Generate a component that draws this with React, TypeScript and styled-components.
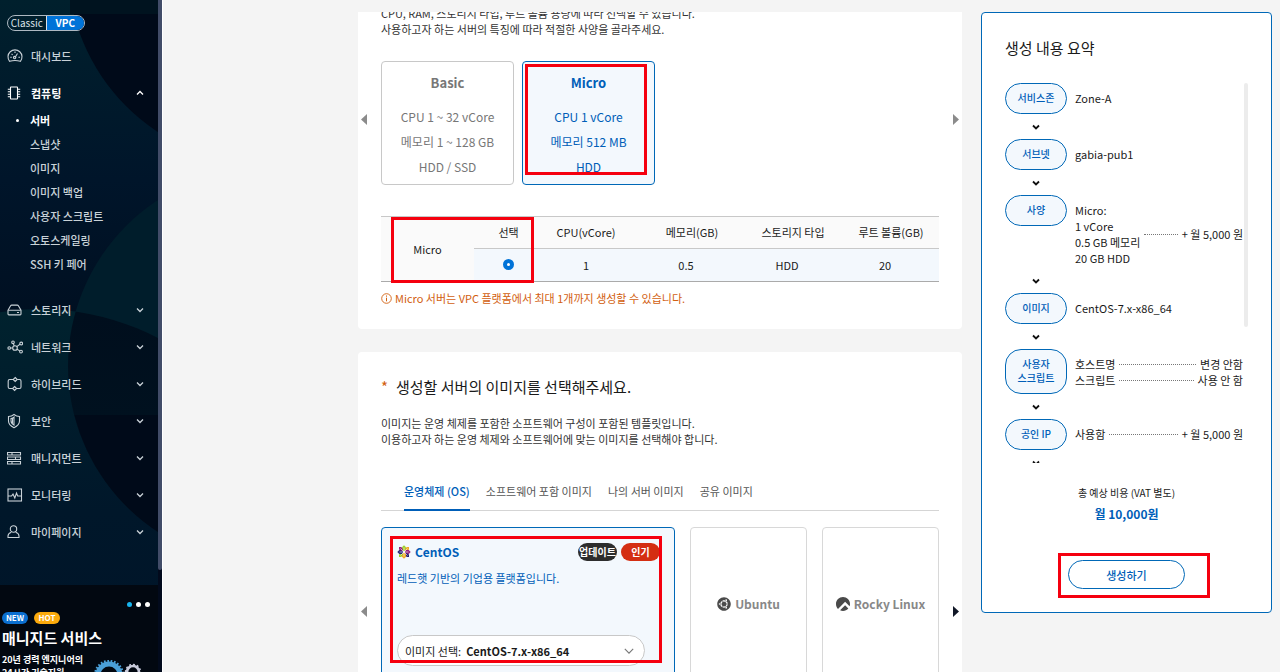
import React, { useState } from "react";
import styled, { createGlobalStyle, css } from "styled-components";
import { FaUbuntu } from "react-icons/fa";
import { SiRockylinux } from "react-icons/si";

const color = {
  page: "#f4f4f4",
  blue: "#005eb8",
  blueLine: "#0068b7",
  tint: "#f3f8fd",
  line: "#c8c8c8",
  muted: "#777",
  ink: "#1a1a1a",
  orange: "#d2600f",
  mark: "#f5000f",
};

const Global = createGlobalStyle`
  *, *::before, *::after { box-sizing: border-box; }
  body {
    margin: 0;
    background: ${color.page};
    color: ${color.ink};
    font: 400 11px/16px "Noto Sans CJK KR", "Noto Sans", sans-serif;
  }
  button, select, input { font: inherit; color: inherit; margin: 0; }
  button { background: none; border: 0; padding: 0; cursor: pointer; }
  h1, h2, p, ul, dl, dd, dt { margin: 0; padding: 0; }
  ul { list-style: none; }
  a { color: inherit; text-decoration: none; }
`;

const Shell = styled.div`
  display: flex;
  height: 100vh;
  overflow: hidden;
`;

/* ---------- sidebar ---------- */

const Sidebar = styled.aside`
  flex: none;
  display: flex;
  flex-direction: column;
  position: relative;
  width: 163px;
  background: #001329;
  color: #c9d2d8;
  border-right: 1px solid #fff;
  overflow: hidden;
`;

const Backdrop = styled.svg`
  position: absolute;
  top: 0;
  left: 0;
  width: 158px;
  height: 815px;
`;

const ScrollTrack = styled.div`
  position: absolute;
  top: 0;
  right: 0;
  bottom: 0;
  width: 4px;
  background: #020a1c;

  &::before {
    content: "";
    display: block;
    height: 570px;
    border-radius: 0 0 2px 2px;
    background: #414c68;
  }
`;

const Nav = styled.nav`
  position: relative;
  flex: 1;
  min-height: 0;
  overflow: hidden;
  padding: 15px 4px 0 7px;
`;

const Platform = styled.div`
  display: flex;
  width: 78px;
  height: 16px;
  margin-bottom: 6px;
  border: 1px solid #aeb9c2;
  border-radius: 8px;
  overflow: hidden;
`;

const PlatformButton = styled.button<{ $on?: boolean }>`
  flex: 1;
  font-size: 10px;
  line-height: 14px;
  color: #dbe2e7;
  ${(p) =>
    p.$on &&
    css`
      background: #0073d8;
      color: #fff;
      font-weight: 700;
      border-left: 1px solid #dbe2e7;
    `}
`;

const NavItem = styled.a<{ $open?: boolean }>`
  display: grid;
  grid-template-columns: 16px 1fr 10px;
  column-gap: 8px;
  align-items: center;
  height: 37px;
  padding-right: 13px;
  font-weight: 500;
  ${(p) =>
    p.$open &&
    css`
      color: #fff;
      font-weight: 700;
    `}
  svg {
    display: block;
    fill: none;
    stroke: currentColor;
  }
`;

const SubList = styled.ul`
  margin: -3px 0 15px;
`;

const SubLink = styled.a<{ $on?: boolean }>`
  display: flex;
  align-items: center;
  height: 24px;
  padding-left: 9px;
  font-weight: ${(p) => (p.$on ? 700 : 500)};
  color: ${(p) => (p.$on ? "#fff" : "inherit")};

  &::before {
    content: "";
    width: 3px;
    height: 3px;
    margin-right: 11px;
    border-radius: 50%;
    background: ${(p) => (p.$on ? "#fff" : "transparent")};
  }
`;

const Promo = styled.section`
  position: relative;
  flex: none;
  height: 87px;
  margin-right: 4px;
  padding: 17px 8px 0 2px;
  background: #020811;
  color: #fff;
  overflow: hidden;
`;

const Dots = styled.div`
  display: flex;
  justify-content: flex-end;
  gap: 4px;
  margin-bottom: 5px;
`;

const Dot = styled.span<{ $on?: boolean }>`
  width: 5px;
  height: 5px;
  border-radius: 50%;
  background: ${(p) => (p.$on ? "#17b4ee" : "#fff")};
`;

const Tags = styled.div`
  display: flex;
  gap: 6px;
`;

const Tag = styled.span<{ $bg: string }>`
  width: 26px;
  border-radius: 6px;
  background: ${(p) => p.$bg};
  font-size: 8px;
  line-height: 12px;
  font-weight: 700;
  text-align: center;
`;

const PromoTitle = styled.p`
  margin-top: 3px;
  font-size: 15px;
  line-height: 22px;
  font-weight: 700;
`;

const PromoText = styled.p`
  margin-top: 4px;
  font-size: 9px;
  line-height: 13px;
  font-weight: 700;
`;

const Gears = styled.svg`
  position: absolute;
  right: 14px;
  bottom: 0;
`;

/* ---------- main column ---------- */

const Page = styled.div`
  flex: 1;
  min-width: 0;
  display: flex;
  align-items: flex-start;
  gap: 19px;
  padding: 12px 8px 0 195px;
`;

const Main = styled.main`
  flex: 1;
  min-width: 0;
  overflow: hidden;
`;

const Card = styled.section<{ $first?: boolean }>`
  background: #fff;
  border-radius: ${(p) => (p.$first ? "0 0 4px 4px" : "4px")};
  padding: ${(p) => (p.$first ? "0 0 23px" : "23px 0")};
  margin-bottom: 23px;
`;

const Inset = styled.div`
  padding: 0 23px;
`;

const Lead = styled.p<{ $clipped?: boolean }>`
  margin-top: ${(p) => (p.$clipped ? "-7px" : "16px")};
  color: #333;
`;

const CardTitle = styled.h1`
  display: flex;
  gap: 8px;
  font-size: 15px;
  line-height: 24px;
  font-weight: 400;
`;

const Required = styled.span`
  color: ${color.orange};
`;

const Carousel = styled.div<{ $gap?: number }>`
  display: grid;
  grid-template-columns: 23px 1fr 23px;
  align-items: start;
  margin-top: ${(p) => p.$gap ?? 0}px;
`;

const Arrow = styled.button<{ $height: number; $next?: boolean; $active?: boolean }>`
  display: flex;
  align-items: center;
  justify-content: ${(p) => (p.$next ? "flex-end" : "flex-start")};
  height: ${(p) => p.$height}px;
  padding: 0 3px;
  color: ${(p) => (p.$active ? "#111827" : "#8b8b8b")};

  svg {
    display: block;
    fill: currentColor;
  }
`;

const SpecRow = styled.div`
  display: flex;
  gap: 8px;
`;

const SpecCard = styled.button<{ $on?: boolean }>`
  position: relative;
  width: 133px;
  height: 124px;
  padding: 8px 0 0;
  border: 1px solid ${(p) => (p.$on ? color.blueLine : color.line)};
  border-radius: 4px;
  background: ${(p) => (p.$on ? color.tint : "#fff")};
  color: ${(p) => (p.$on ? color.blue : color.muted)};
  font-size: 12px;
  line-height: 25px;
  display: flex;
  flex-direction: column;
  align-items: center;
`;

const SpecName = styled.strong`
  margin-bottom: 9px;
  font-size: 13px;
  font-weight: 700;
`;

const Mark = styled.span<{ $inset: string; $width?: number }>`
  position: absolute;
  inset: ${(p) => p.$inset};
  width: ${(p) => (p.$width ? `${p.$width}px` : "auto")};
  border: 3px solid ${color.mark};
  pointer-events: none;
`;

const TableBox = styled.div`
  position: relative;
  margin-top: 31px;
`;

const SpecTable = styled.table`
  width: 100%;
  table-layout: fixed;
  border-collapse: collapse;
  border-top: 1px solid ${color.line};
  border-bottom: 1px solid #aaa;
  text-align: center;

  th,
  td {
    height: 32px;
    padding: 0 0 1px;
    font-weight: 400;
  }
  td {
    height: 33px;
    background: ${color.tint};
  }
  th {
    background: #fafafa;
  }
  th:nth-child(n + 4) {
    padding-left: 12px;
  }
  th:not(:first-child) {
    border-bottom: 1px solid ${color.line};
  }
`;

const Radio = styled.input`
  appearance: none;
  display: block;
  width: 11px;
  height: 11px;
  margin: 0 auto;
  border: 4px solid #0073d8;
  border-radius: 50%;
  background: #fff;
`;

const Notice = styled.p`
  display: flex;
  align-items: center;
  gap: 3px;
  margin-top: 8px;
  color: ${color.orange};

  svg {
    fill: none;
    stroke: currentColor;
  }
`;

const Tabs = styled.div`
  display: flex;
  gap: 16px;
  margin: 30px 23px 16px;
  padding: 0 23px;
  border-bottom: 1px solid #d5d5d5;
`;

const Tab = styled.button<{ $on?: boolean }>`
  height: 34px;
  margin-bottom: -1px;
  padding-bottom: 4px;
  border-bottom: 2px solid ${(p) => (p.$on ? color.blue : "transparent")};
  color: ${(p) => (p.$on ? color.blue : "#555")};
  font-weight: ${(p) => (p.$on ? 500 : 400)};
`;

const OsRow = styled.div`
  display: flex;
  gap: 15px;
`;

const OsCard = styled.div`
  position: relative;
  flex: 1;
  height: 154px;
  padding: 15px 14px 15px 15px;
  border: 1px solid ${color.blueLine};
  border-radius: 4px;
  background: ${color.tint};
  color: ${color.blue};
  display: flex;
  flex-direction: column;
`;

const OsHead = styled.div`
  display: flex;
  align-items: center;
  gap: 4px;
  height: 18px;
`;

const OsName = styled.strong`
  flex: 1;
  font-size: 12px;
  font-weight: 700;
`;

const Badge = styled.span<{ $bg: string }>`
  width: 39px;
  border-radius: 9px;
  background: ${(p) => p.$bg};
  color: #fff;
  font-size: 10px;
  line-height: 18px;
  font-weight: 700;
  text-align: center;
`;

const OsText = styled.p`
  margin-top: 9px;
`;

const ImagePick = styled.label`
  display: flex;
  align-items: center;
  flex: none;
  height: 31px;
  margin: 49px 15px 0 0;
  padding: 0 8px 0 7px;
  border: 1px solid ${color.line};
  border-radius: 16px;
  background: #fff;
  color: ${color.ink};

  svg {
    flex: none;
    fill: none;
    stroke: #777;
  }
`;

const ImageSelect = styled.select`
  appearance: none;
  flex: 1;
  min-width: 0;
  padding: 0 0 0 5px;
  border: 0;
  background: transparent;
  font-weight: 700;
`;

const OsSmall = styled.button`
  flex: none;
  display: flex;
  align-items: center;
  justify-content: center;
  gap: 4px;
  width: 117px;
  height: 154px;
  border: 1px solid #d8d8d8;
  border-radius: 4px;
  background: #fff;
  color: #888;
  font-size: 12px;
  font-weight: 700;

  svg {
    color: #4a4a4a;
  }
`;

/* ---------- summary ---------- */

const Summary = styled.aside`
  flex: none;
  width: 291px;
  padding: 23px;
  border: 1px solid ${color.blueLine};
  border-radius: 4px;
  background: #fff;
`;

const SummaryTitle = styled.h2`
  font-size: 15px;
  line-height: 24px;
  font-weight: 400;
`;

const SummaryScroll = styled.div`
  position: relative;
  height: 380px;
  margin-top: 23px;
  padding-right: 5px;
  overflow: hidden;

  &::after {
    content: "";
    position: absolute;
    top: 0;
    right: 0;
    width: 4px;
    height: 244px;
    border-radius: 2px;
    background: #ececec;
  }
`;

const Step = styled.div`
  display: grid;
  grid-template-columns: 62px 1fr;
  column-gap: 8px;
  align-items: start;
`;

const StepName = styled.dt`
  display: flex;
  align-items: center;
  justify-content: center;
  min-height: 31px;
  padding: 7px 0 8px;
  border: 1px solid ${color.blueLine};
  border-radius: 16px;
  background: ${color.tint};
  color: ${color.blue};
  font-size: 10px;
  line-height: 14px;
  font-weight: 500;
  text-align: center;
  white-space: pre-line;
`;

const StepBody = styled.dd`
  padding: 7px 0 2px;
`;

const Entry = styled.div`
  display: flex;
  align-items: center;
  gap: 4px;
  white-space: pre-line;
`;

const Leader = styled.span`
  flex: 1;
  border-top: 1px dotted #777;
`;

const StepArrow = styled.div`
  display: flex;
  align-items: center;
  justify-content: center;
  width: 62px;
  height: 25px;

  svg {
    fill: none;
    stroke: #111;
  }
`;

const Total = styled.div`
  margin-top: 21px;
  text-align: center;
  font-size: 10px;
  line-height: 18px;
`;

const TotalPrice = styled.strong`
  display: block;
  color: ${color.blue};
  font-size: 12px;
  line-height: 24px;
  font-weight: 700;
`;

const CreateBox = styled.div`
  position: relative;
  width: 117px;
  margin: 34px auto 0;
`;

const CreateButton = styled.button`
  display: block;
  width: 100%;
  height: 29px;
  border: 1px solid ${color.blueLine};
  border-radius: 15px;
  color: ${color.blue};
  font-weight: 500;
`;

/* ---------- drawings ---------- */

const Chevron = ({ up, size = 10, width = 1.3 }: { up?: boolean; size?: number; width?: number }) => (
  <svg width={size} height={size} viewBox="0 0 10 10" strokeWidth={width} aria-hidden="true">
    <path d={up ? "M2 6.5 5 3.5 8 6.5" : "M2 3.5 5 6.5 8 3.5"} />
  </svg>
);

const Triangle = ({ next }: { next?: boolean }) => (
  <svg width="6" height="11" viewBox="0 0 6 11" aria-hidden="true">
    <path d={next ? "M0 0 6 5.5 0 11Z" : "M6 0 0 5.5 6 11Z"} />
  </svg>
);

const icons: Record<string, React.ReactNode> = {
  dashboard: (
    <>
      <path d="M2.6 13.3A7 7 0 1 1 13.4 13.3Q8 11.6 2.6 13.3Z" />
      <path d="M8 9.5 10.5 5.5M3.2 9.3h1.6M11.4 9.3H13M4.6 5.8l1 1M8 3.6v1.5" />
      <circle cx="7.6" cy="9.6" r="1.2" />
    </>
  ),
  compute: (
    <>
      <rect x="3.5" y="2" width="7" height="12" rx="0.5" />
      <path d="M.8 4.2h2.7M.8 6.7h2.7M.8 9.2h2.7M.8 11.7h2.7M10.5 4.2h2.7M10.5 6.7h2.7M10.5 9.2h2.7M10.5 11.7h2.7" />
    </>
  ),
  storage: (
    <>
      <path d="M1 8.2 3.6 3.7Q4 3.1 4.7 3.1h5.6q.7 0 1.1.6L14 8.2V12q0 .9-.9.9H1.9Q1 12.9 1 12Z" />
      <path d="M1.2 8.2H13.8M10 10.5h2" />
    </>
  ),
  network: (
    <>
      <circle cx="8" cy="9" r="2.3" />
      <circle cx="2.2" cy="9" r="1.3" />
      <circle cx="6" cy="3.3" r="1.3" />
      <circle cx="14.2" cy="4.5" r="1.4" />
      <circle cx="14" cy="12.6" r="1.4" />
      <path d="M3.5 9h2.2M6.4 4.6 7.2 6.9M13 5.3 9.8 7.6M10 10.2l2.800 1.700" />
    </>
  ),
  hybrid: (
    <>
      <path d="M6.200 3.500H2.700Q1.200 3.500 1.200 5v6q0 1.500 1.500 1.500h3M10.200 3.500h2.300Q14 3.500 14 5v6q0 1.500-1.500 1.500H9.500" />
      <path d="M8.200 1.500 10.200 3.500 8.200 5.500 6.200 3.500ZM7.600 10.500l2 2-2 2-2-2Z" />
    </>
  ),
  security: (
    <>
      <path d="M7 1.500q2.500 2 5.500 2V8q0 4-5.500 6.700Q1.500 12 1.500 8V3.500q3 0 5.500-2Z" />
      <path d="M7 4.200V12Q4 10.300 4 7.700V5.500Q5.800 5.400 7 4.200ZM5.500 5.500v4.700" />
    </>
  ),
  management: (
    <path d="M.5 2.500h4.500v2.500H.5ZM5 2.500h8.500v2.500H5ZM.5 7h8v2.500h-8ZM8.500 7h5v2.500h-5ZM.5 11.500h4.500V14H.5ZM5 11.500h8.500V14H5Z" />
  ),
  monitoring: (
    <>
      <rect x="1" y="2" width="13.500" height="12" />
      <path d="M1 9h3.500l1.500-2 1.800 4L9.500 6l1.200 3h3.800" />
    </>
  ),
  user: (
    <>
      <circle cx="6.500" cy="5" r="3.200" />
      <path d="M4.300 8.200Q1 9.400 1 12v1.500h11V12q0-2.600-3.300-3.800" />
    </>
  ),
};

const NavIcon = ({ name }: { name: string }) => (
  <svg width="16" height="16" viewBox="0 0 16 16" strokeWidth="1.1" aria-hidden="true">
    {icons[name]}
  </svg>
);

const SidebarBackdrop = () => (
  <Backdrop viewBox="0 0 158 815" aria-hidden="true">
    <defs>
      <linearGradient id="tile" x1="0" y1="0" x2="0" y2="1">
        <stop offset="0" stopColor="#00202d" />
        <stop offset="0.45" stopColor="#00152a" />
        <stop offset="1" stopColor="#000c1c" />
      </linearGradient>
      <linearGradient id="glow" x1="0" y1="0" x2="0" y2="1">
        <stop offset="0" stopColor="#00222e" />
        <stop offset="0.4" stopColor="#00172a" />
        <stop offset="1" stopColor="#001127" />
      </linearGradient>
      <linearGradient id="shade" x1="0" y1="0" x2="0" y2="1">
        <stop offset="0" stopColor="#000a1a" />
        <stop offset="1" stopColor="#001522" />
      </linearGradient>
      <clipPath id="lens">
        <circle cx="40" cy="563" r="254" />
      </clipPath>
    </defs>
    <rect width="158" height="400" fill="url(#tile)" />
    <circle cx="266" cy="-34" r="198" fill="#000a19" />
    <rect x="70" width="88" height="14" fill="#00131f" />
    <circle cx="266" cy="366" r="198" fill="#001d2b" />
    <circle cx="40" cy="563" r="254" fill="url(#glow)" />
    <g clipPath="url(#lens)">
      <circle cx="266" cy="366" r="198" fill="url(#shade)" />
      <path d="M74.500 415H158V532A198 198 0 0 1 74.500 415Z" fill="#000a19" />
    </g>
  </Backdrop>
);

const CentosLogo = () => (
  <svg width="14" height="14" viewBox="0 0 14 14" aria-hidden="true">
    {[0, 90, 180, 270].map((a, i) => (
      <g key={a} transform={`rotate(${a} 7 7)`}>
        <path d="M7 .3 9 2.300V5L7 6.600 5 5V2.300Z" fill={["#9ccd2a", "#932279", "#efa724", "#262577"][i]} />
        <path d="M9.600 2h2.400v2.400L9.600 5.900 8.100 6.100 8.300 4.400Z" fill={["#efa724", "#262577", "#9ccd2a", "#932279"][i]} />
      </g>
    ))}
    <path d="M7 2.500v9M2.500 7h9M3.500 3.500l7 7M10.500 3.500l-7 7" stroke="#fff" strokeWidth="0.600" />
  </svg>
);

const GearShape = ({ cx, cy, r, fill, teeth }: { cx: number; cy: number; r: number; fill: string; teeth: number }) => (
  <g fill="none" stroke={fill}>
    <circle cx={cx} cy={cy} r={r} strokeWidth={r * 0.45} />
    <circle cx={cx} cy={cy} r={r * 1.25} strokeWidth={r * 0.25} pathLength={teeth * 2} strokeDasharray="1 1" />
  </g>
);

/* ---------- data ---------- */

const subItems = ["서버", "스냅샷", "이미지", "이미지 백업", "사용자 스크립트", "오토스케일링", "SSH 키 페어"];

const sections = [
  ["storage", "스토리지"],
  ["network", "네트워크"],
  ["hybrid", "하이브리드"],
  ["security", "보안"],
  ["management", "매니지먼트"],
  ["monitoring", "모니터링"],
  ["user", "마이페이지"],
];

const tabs = ["운영체제 (OS)", "소프트웨어 포함 이미지", "나의 서버 이미지", "공유 이미지"];

const steps: { name: string; entries: [string, string?][] }[] = [
  { name: "서비스존", entries: [["Zone-A"]] },
  { name: "서브넷", entries: [["gabia-pub1"]] },
  { name: "사양", entries: [["Micro:\n1 vCore\n0.5 GB 메모리\n20 GB HDD", "+ 월 5,000 원"]] },
  { name: "이미지", entries: [["CentOS-7.x-x86_64"]] },
  {
    name: "사용자\n스크립트",
    entries: [
      ["호스트명", "변경 안함"],
      ["스크립트", "사용 안 함"],
    ],
  },
  { name: "공인 IP", entries: [["사용함", "+ 월 5,000 원"]] },
];

export default function App() {
  const [tab, setTab] = useState(0);

  return (
    <>
      <Global />
      <Shell>
        <Sidebar>
          <SidebarBackdrop />
          <Nav>
            <Platform>
              <PlatformButton>Classic</PlatformButton>
              <PlatformButton $on>VPC</PlatformButton>
            </Platform>
            <NavItem href="#dashboard">
              <NavIcon name="dashboard" />
              대시보드
            </NavItem>
            <NavItem href="#compute" $open>
              <NavIcon name="compute" />
              컴퓨팅
              <Chevron up />
            </NavItem>
            <SubList>
              {subItems.map((label, i) => (
                <li key={label}>
                  <SubLink href={`#sub-${i}`} $on={i === 0}>
                    {label}
                  </SubLink>
                </li>
              ))}
            </SubList>
            {sections.map(([icon, label]) => (
              <NavItem key={icon} href={`#${icon}`}>
                <NavIcon name={icon} />
                {label}
                <Chevron />
              </NavItem>
            ))}
          </Nav>
          <Promo>
            <Dots>
              <Dot $on />
              <Dot />
              <Dot />
            </Dots>
            <Tags>
              <Tag $bg="#0b6fd0">NEW</Tag>
              <Tag $bg="#fbaa0c">HOT</Tag>
            </Tags>
            <PromoTitle>매니지드 서비스</PromoTitle>
            <PromoText>
              20년 경력 엔지니어의
              <br />
              24시간 기술지원
            </PromoText>
            <Gears width="50" height="12" viewBox="0 0 50 12" aria-hidden="true">
              <GearShape cx={15} cy={15} r={11} fill="#4a9fd8" teeth={26} />
              <GearShape cx={39} cy={12} r={6} fill="#c9cbdc" teeth={12} />
            </Gears>
          </Promo>
          <ScrollTrack />
        </Sidebar>

        <Page>
          <Main>
            <Card $first>
              <Inset>
                <Lead $clipped>
                  CPU, RAM, 스토리지 타입, 루트 볼륨 용량에 따라 선택할 수 있습니다.
                  <br />
                  사용하고자 하는 서버의 특징에 따라 적절한 사양을 골라주세요.
                </Lead>
              </Inset>
              <Carousel $gap={24}>
                <Arrow $height={116} aria-label="이전 사양">
                  <Triangle />
                </Arrow>
                <SpecRow>
                  <SpecCard>
                    <SpecName>Basic</SpecName>
                    <span>CPU 1 ~ 32 vCore</span>
                    <span>메모리 1 ~ 128 GB</span>
                    <span>HDD / SSD</span>
                  </SpecCard>
                  <SpecCard $on>
                    <SpecName>Micro</SpecName>
                    <span>CPU 1 vCore</span>
                    <span>메모리 512 MB</span>
                    <span>HDD</span>
                    <Mark $inset="2px 7px 9px 2px" />
                  </SpecCard>
                </SpecRow>
                <Arrow $height={116} $next aria-label="다음 사양">
                  <Triangle next />
                </Arrow>
              </Carousel>
              <Inset>
                <TableBox>
                  <SpecTable>
                    <colgroup>
                      <col width="93" />
                      <col width="69" />
                      <col width="86" />
                      <col width="114" />
                      <col width="88" />
                      <col />
                    </colgroup>
                    <tbody>
                      <tr>
                        <th rowSpan={2} scope="rowgroup">
                          Micro
                        </th>
                        <th scope="col">선택</th>
                        <th scope="col">CPU(vCore)</th>
                        <th scope="col">메모리(GB)</th>
                        <th scope="col">스토리지 타입</th>
                        <th scope="col">루트 볼륨(GB)</th>
                      </tr>
                      <tr>
                        <td>
                          <Radio type="radio" name="spec" aria-label="Micro 선택" defaultChecked />
                        </td>
                        <td>1</td>
                        <td>0.5</td>
                        <td>HDD</td>
                        <td>20</td>
                      </tr>
                    </tbody>
                  </SpecTable>
                  <Mark $inset="1px auto -1px 10px" $width={143} />
                </TableBox>
                <Notice>
                  <svg width="11" height="11" viewBox="0 0 11 11" aria-hidden="true">
                    <circle cx="5.500" cy="5.500" r="4.800" strokeWidth="0.900" />
                    <path d="M5.500 2.500v1.200M5.500 4.700v3.600" />
                  </svg>
                  Micro 서버는 VPC 플랫폼에서 최대 1개까지 생성할 수 있습니다.
                </Notice>
              </Inset>
            </Card>

            <Card>
              <Inset>
                <CardTitle>
                  <Required>*</Required>
                  생성할 서버의 이미지를 선택해주세요.
                </CardTitle>
                <Lead>
                  이미지는 운영 체제를 포함한 소프트웨어 구성이 포함된 템플릿입니다.
                  <br />
                  이용하고자 하는 운영 체제와 소프트웨어에 맞는 이미지를 선택해야 합니다.
                </Lead>
              </Inset>
              <Tabs role="tablist">
                {tabs.map((label, i) => (
                  <Tab key={label} role="tab" aria-selected={tab === i} $on={tab === i} onClick={() => setTab(i)}>
                    {label}
                  </Tab>
                ))}
              </Tabs>
              <Carousel>
                <Arrow $height={168} aria-label="이전 이미지">
                  <Triangle />
                </Arrow>
                <OsRow>
                  <OsCard>
                    <OsHead>
                      <CentosLogo />
                      <OsName>CentOS</OsName>
                      <Badge $bg="#2d2d2d">업데이트</Badge>
                      <Badge $bg="#d42e12">인기</Badge>
                    </OsHead>
                    <OsText>레드햇 기반의 기업용 플랫폼입니다.</OsText>
                    <ImagePick>
                      이미지 선택:
                      <ImageSelect defaultValue="centos7">
                        <option value="centos7">CentOS-7.x-x86_64</option>
                      </ImageSelect>
                      <Chevron size={14} width={0.8} />
                    </ImagePick>
                    <Mark $inset="8px 12px 17px 8px" />
                  </OsCard>
                  <OsSmall>
                    <FaUbuntu size={14} />
                    Ubuntu
                  </OsSmall>
                  <OsSmall>
                    <SiRockylinux size={14} />
                    Rocky Linux
                  </OsSmall>
                </OsRow>
                <Arrow $height={168} $next $active aria-label="다음 이미지">
                  <Triangle next />
                </Arrow>
              </Carousel>
            </Card>
          </Main>

          <Summary>
            <SummaryTitle>생성 내용 요약</SummaryTitle>
            <SummaryScroll>
              <dl>
                {steps.map((step) => (
                  <React.Fragment key={step.name}>
                    <Step>
                      <StepName>{step.name}</StepName>
                      <StepBody>
                        {step.entries.map(([text, value]) => (
                          <Entry key={text}>
                            <span>{text}</span>
                            {value && <Leader />}
                            {value && <span>{value}</span>}
                          </Entry>
                        ))}
                      </StepBody>
                    </Step>
                    <StepArrow>
                      <Chevron width={1.8} />
                    </StepArrow>
                  </React.Fragment>
                ))}
              </dl>
            </SummaryScroll>
            <Total>
              총 예상 비용 (VAT 별도)
              <TotalPrice>월 10,000원</TotalPrice>
            </Total>
            <CreateBox>
              <CreateButton>생성하기</CreateButton>
              <Mark $inset="-7px -25px -9px -10px" />
            </CreateBox>
          </Summary>
        </Page>
      </Shell>
    </>
  );
}
